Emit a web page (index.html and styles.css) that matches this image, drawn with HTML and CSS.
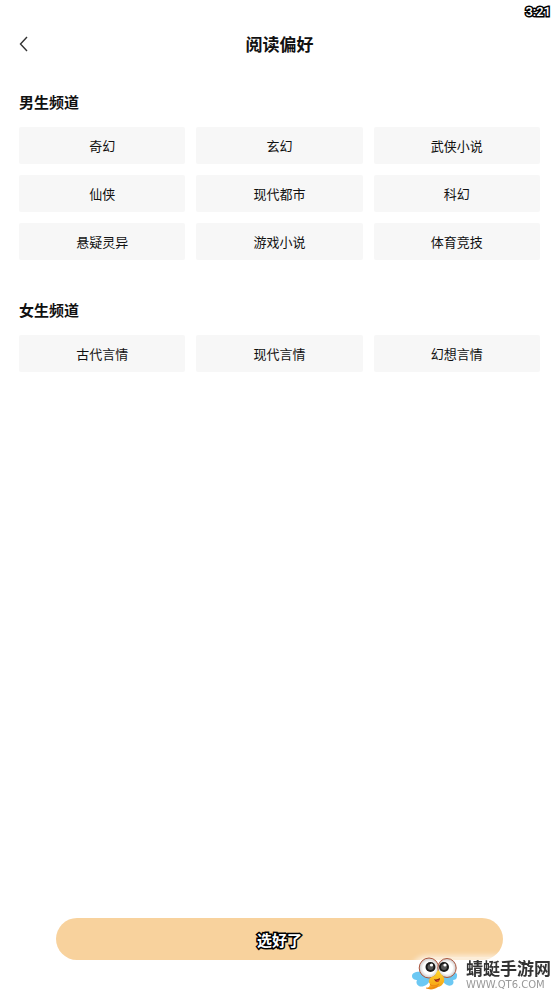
FILE: index.html
```html
<!DOCTYPE html>
<html lang="zh-CN">
<head>
    <meta charset="UTF-8">
    <meta name="viewport" content="width=device-width, initial-scale=1">
    <title>阅读偏好</title>
    <link rel="stylesheet" href="styles.css">
</head>
<body>
    <div class="status-bar">
        <span class="outlined">3:21</span>
    </div>
    <header class="nav-bar">
        <button class="back" type="button" aria-label="返回">
            <svg width="10" height="16" viewBox="0 0 10 16">
                <path d="M8 1 L1.5 8 L8 15" fill="none" stroke="#333" stroke-width="1.4"/>
            </svg>
        </button>
        <h1>阅读偏好</h1>
    </header>
    <main>
        <section class="channel">
            <h2>男生频道</h2>
            <div class="tags">
                <button type="button">奇幻</button>
                <button type="button">玄幻</button>
                <button type="button">武侠小说</button>
                <button type="button">仙侠</button>
                <button type="button">现代都市</button>
                <button type="button">科幻</button>
                <button type="button">悬疑灵异</button>
                <button type="button">游戏小说</button>
                <button type="button">体育竞技</button>
            </div>
        </section>
        <section class="channel">
            <h2>女生频道</h2>
            <div class="tags">
                <button type="button">古代言情</button>
                <button type="button">现代言情</button>
                <button type="button">幻想言情</button>
            </div>
        </section>
    </main>
    <footer>
        <button class="confirm outlined" type="button">选好了</button>
    </footer>

    <div class="site-mark">
        <svg width="46" height="34" viewBox="0 0 46 34">
            <defs>
                <radialGradient id="eye">
                    <stop offset="0.6" stop-color="#fff"/>
                    <stop offset="1" stop-color="#cbc8c8"/>
                </radialGradient>
                <linearGradient id="body" x1="0" y1="0" x2="0" y2="1">
                    <stop offset="0" stop-color="#ffd92e"/>
                    <stop offset="1" stop-color="#f59a12"/>
                </linearGradient>
            </defs>
            <!-- wings -->
            <path d="M10 15 C4 14 0 16 0 19 C0 22 3 23 5 23 C3 27 7 31 12 29 C17 27 19 23 18 19 Z" fill="#6cc8f3"/>
            <path d="M36 15 C42 14 46 16 45 19 C45 22 43 23 41 23 C43 27 39 30 35 28 C31 26 29 22 29 19 Z" fill="#6cc8f3"/>
            <!-- eyes -->
            <ellipse cx="17" cy="11" rx="9.8" ry="10" fill="url(#eye)" stroke="#a9543c" stroke-width="1"/>
            <ellipse cx="35" cy="11" rx="9.2" ry="9.5" fill="url(#eye)" stroke="#a9543c" stroke-width="1"/>
            <circle cx="18.5" cy="10" r="5" fill="#181818"/>
            <circle cx="32" cy="10" r="5" fill="#181818"/>
            <circle cx="18.5" cy="10" r="3" fill="#555"/>
            <circle cx="32" cy="10" r="3" fill="#555"/>
            <circle cx="19.5" cy="8" r="1.6" fill="#fff"/>
            <circle cx="33" cy="8" r="1.6" fill="#fff"/>
            <!-- body and curled tail -->
            <path d="M26 13 C28 14 28 17 30 18 C35 23 31 29 26 30 C22 33 17 33 14 31 C17 31 18 29 18 27 C15 24 18 20 22 19 C24 18 24 15 26 13 Z" fill="url(#body)"/>
            <path d="M18 27 C20 30 24 29 27 27 M14 31 C18 32 22 31 26 29" fill="none" stroke="#e87812" stroke-width="0.8"/>
            <path d="M22 22 C24 23 26 22 28 21 C28 25 24 27 22 22 Z" fill="#8d2415"/>
            <path d="M24 24 C25 23 27 23 27 23 C26 25 25 25 24 24 Z" fill="#f0572f"/>
        </svg>
        <div class="site-text">
            <span class="site-name">蜻蜓手游网</span>
            <span class="site-url">WWW.QT6.COM</span>
        </div>
    </div>
</body>
</html>
```
FILE: styles.css
```css
* {
    box-sizing: border-box;
}

body {
    display: flex;
    flex-direction: column;
    min-height: 100vh;
    margin: 0;
    background-color: #fff;
    color: #111;
    font-family: "Noto Sans CJK SC", sans-serif;
}

h1, h2 {
    margin: 0;
    font-weight: bold;
}

button {
    border: none;
    padding: 0;
    font-family: inherit;
    color: inherit;
    cursor: pointer;
}

/* light text with a dark edge */
.outlined {
    color: #fff;
    font-weight: 500;
    -webkit-text-stroke: 3px #000;
    paint-order: stroke fill;
}

.status-bar {
    height: 24px;
    padding: 0 8px;
    font-family: Roboto, sans-serif;
    font-size: 13px;
    line-height: 24px;
    text-align: right;
}

.nav-bar {
    display: grid;
    grid-template-columns: 24px 1fr 24px;
    align-items: center;
    height: 40px;
    padding: 0 19px;
}

.nav-bar h1 {
    font-size: 17px;
    line-height: 24px;
    text-align: center;
}

.back {
    display: flex;
    background: none;
}

.channel {
    padding: 26px 19px 0;
}

.channel + .channel {
    padding-top: 38px;
}

.channel h2 {
    margin-bottom: 13px;
    font-size: 15px;
    line-height: 24px;
}

.tags {
    display: grid;
    grid-template-columns: repeat(3, 1fr);
    gap: 11px;
}

.tags button {
    height: 37px;
    border-radius: 2px;
    background-color: #f7f7f7;
    font-size: 13px;
}

footer {
    margin-top: auto;
    padding: 0 56px 33px;
}

.confirm {
    display: block;
    width: 100%;
    height: 42px;
    border-radius: 21px;
    background-color: #f8d29d;
    font-size: 15px;
    font-weight: bold;
}

/* site badge lying over the page corner */
.site-mark {
    position: fixed;
    right: 8px;
    bottom: 2px;
    display: flex;
    gap: 8px;
    align-items: center;
    border-radius: 16px;
    background-color: rgba(255, 255, 255, 0.6);
    box-shadow: 0 0 5px 2px rgba(255, 255, 255, 0.6);
}

.site-text {
    display: flex;
    flex-direction: column;
}

.site-name {
    color: #333;
    font-size: 17px;
    font-weight: bold;
    line-height: 22px;
}

.site-url {
    color: #999;
    font-family: "DejaVu Sans", sans-serif;
    font-size: 10px;
    line-height: 12px;
}
```
